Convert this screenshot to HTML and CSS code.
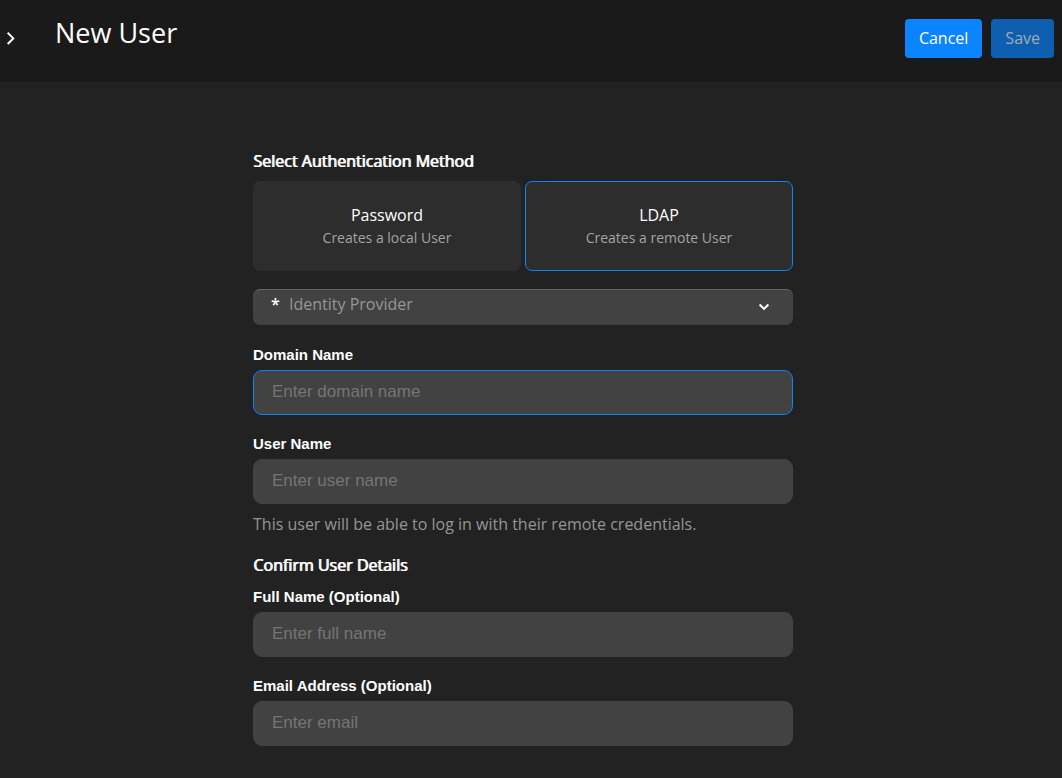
FILE: index.html
```html
<!DOCTYPE html>
<html lang="en">
<head>
<meta charset="utf-8">
<meta name="viewport" content="width=device-width, initial-scale=1">
<title>New User</title>
<link rel="stylesheet" href="styles.css">
</head>
<body>
<header class="topbar">
  <button class="expand" type="button" aria-label="Expand navigation">
    <svg width="10" height="14" viewBox="0 0 10 14" aria-hidden="true"><path d="M1.7 1.8 7.3 7.4 1.7 13"/></svg>
  </button>
  <h1 class="title">New User</h1>
  <div class="actions">
    <button class="btn" type="button">Cancel</button>
    <button class="btn" type="submit" form="user-form" disabled>Save</button>
  </div>
</header>
<main class="page">
  <form class="form" id="user-form">
    <fieldset class="group">
      <legend class="heading">Select Authentication Method</legend>
      <div class="methods">
        <label class="card">
          <input class="card-radio" type="radio" name="method" value="password">
          <span class="card-name">Password</span>
          <span class="card-note">Creates a local User</span>
        </label>
        <label class="card">
          <input class="card-radio" type="radio" name="method" value="ldap" checked>
          <span class="card-name">LDAP</span>
          <span class="card-note">Creates a remote User</span>
        </label>
      </div>
    </fieldset>
    <div class="provider">
      <label class="required" for="provider" aria-label="Identity Provider, required">*</label>
      <select class="provider-select" id="provider" required>
        <option value="">Identity Provider</option>
      </select>
      <svg class="chevron" width="12" height="8" viewBox="0 0 12 8" aria-hidden="true"><path d="M1.6 1.5 6 5.9 10.4 1.5"/></svg>
    </div>
    <div class="field first">
      <label class="label" for="domain">Domain Name</label>
      <input class="input active" id="domain" type="text" placeholder="Enter domain name">
    </div>
    <div class="field">
      <label class="label" for="username">User Name</label>
      <input class="input" id="username" type="text" placeholder="Enter user name">
    </div>
    <p class="help">This user will be able to log in with their remote credentials.</p>
    <h2 class="heading">Confirm User Details</h2>
    <div class="field details">
      <label class="label" for="fullname">Full Name (Optional)</label>
      <input class="input" id="fullname" type="text" placeholder="Enter full name">
    </div>
    <div class="field">
      <label class="label" for="email">Email Address (Optional)</label>
      <input class="input" id="email" type="email" placeholder="Enter email">
    </div>
  </form>
</main>
</body>
</html>
```

FILE: styles.css
```css
* { box-sizing: border-box; }

body {
  margin: 0;
  background: #222222;
  color: #ffffff;
  font-family: "Open Sans", "Noto Sans", sans-serif;
  font-size: 16px;
  line-height: 22px;
}

.topbar {
  display: flex;
  align-items: flex-start;
  padding: 15px 8px 0 6px;
  min-height: 82px;
  background: #1a1a1a;
}

.expand {
  display: flex;
  margin: 16px 39px 0 0;
  padding: 0;
  border: 0;
  background: none;
}

.expand path,
.chevron path {
  fill: none;
  stroke: #ffffff;
  stroke-width: 2;
}

.title {
  margin: 0;
  font-size: 27px;
  font-weight: 400;
  line-height: 36px;
}

.actions {
  display: flex;
  gap: 9px;
  margin: 4px 0 0 auto;
}

.btn {
  padding: 8px 14px 9px;
  border: 0;
  border-radius: 4px;
  background: #0a84ff;
  color: #ffffff;
  font: inherit;
}

.btn:disabled {
  background: #0f5fb0;
  color: #a2aab2;
}

.page { padding: 68px 16px 32px 0; }

.form {
  max-width: 540px;
  margin: 0 auto;
}

.group {
  min-width: 0;
  margin: 0;
  padding: 0;
  border: 0;
}

.heading {
  margin: 0;
  padding: 0;
  font-size: 16px;
  font-weight: 400;
  text-shadow: 1px 0 #ffffff;
}

.methods {
  display: grid;
  grid-template-columns: 1fr 1fr;
  gap: 4px;
  margin-top: 9px;
}

.card {
  position: relative;
  display: flex;
  flex-direction: column;
  align-items: center;
  padding: 22px 16px 20px;
  border: 1px solid #2d2d2d;
  border-radius: 7px;
  background: #2d2d2d;
}

.card:has(:checked) { border-color: #0a84ff; }

.card-radio {
  position: absolute;
  inset: 0;
  margin: 0;
  opacity: 0;
}

.card-note {
  color: #a3a3a3;
  font-size: 14px;
  line-height: 24px;
}

.provider {
  position: relative;
  margin-top: 18px;
}

.provider-select {
  display: block;
  appearance: none;
  width: 100%;
  height: 36px;
  padding: 0 36px 8px;
  border: 0;
  border-top: 1px solid #666666;
  border-radius: 7px;
  background: #424242;
  color: #969696;
  font: inherit;
}

.required {
  position: absolute;
  top: 4px;
  left: 18px;
  font-weight: 600;
}

.chevron {
  position: absolute;
  top: 14px;
  right: 23px;
  pointer-events: none;
}

.field { margin-top: 20px; }

.field.first { margin-top: 21px; }

.label {
  display: block;
  margin-bottom: 6px;
  font: 700 15px/18px "Liberation Sans", Arial, sans-serif;
}

.input {
  display: block;
  width: 100%;
  height: 45px;
  padding: 0 18px 2px;
  border: 1px solid #424242;
  border-radius: 9px;
  background: #424242;
  color: #ffffff;
  font: 17px "Liberation Sans", Arial, sans-serif;
}

.input::placeholder { color: #757575; }

.input.active,
.input:focus {
  border-color: #0a84ff;
  outline: 0;
}

.help {
  margin: 8px 0 18px;
  color: #969696;
  line-height: 24px;
}

.field.details { margin-top: 12px; }
```
